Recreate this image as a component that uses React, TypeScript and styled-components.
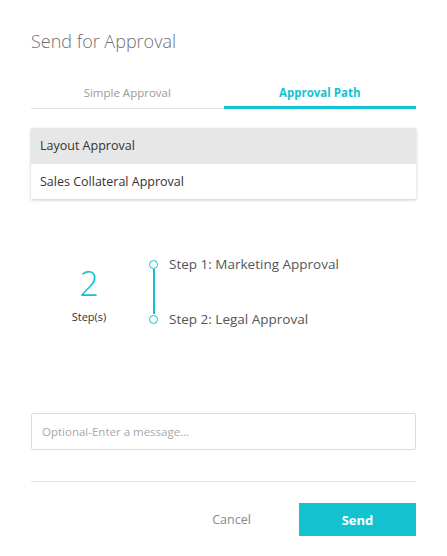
import React from "react";
import styled, { createGlobalStyle } from "styled-components";

const GlobalStyle = createGlobalStyle`
  html, body {
    margin: 0;
    padding: 0;
    background: #ffffff;
  }
  body {
    font-family: "Open Sans", "Liberation Sans", sans-serif;
  }
`;

const teal = "#12c3cf";

const Dialog = styled.div`
  width: 447px;
  height: 556px;
  box-sizing: border-box;
  padding: 28px 31px 0 31px;
  display: flex;
  flex-direction: column;
`;

const Title = styled.h2`
  margin: 0;
  font-size: 18px;
  font-weight: 300;
  color: #6f6f6f;
  line-height: 26px;
`;

const Tabs = styled.div`
  margin-top: 31px;
  display: flex;
  border-bottom: 1px solid #e3e3e3;
`;

const Tab = styled.div<{ $active?: boolean }>`
  flex: 1;
  text-align: center;
  font-size: 11.5px;
  line-height: 16px;
  padding-bottom: 5px;
  margin-bottom: -1px;
  color: ${(p) => (p.$active ? teal : "#9a9a9a")};
  font-weight: ${(p) => (p.$active ? 700 : 400)};
  border-bottom: 3px solid ${(p) => (p.$active ? teal : "transparent")};
`;

const List = styled.div`
  margin-top: 19px;
  box-shadow: 0 1px 3px rgba(0, 0, 0, 0.22);
  display: flex;
  flex-direction: column;
`;

const ListItem = styled.div<{ $selected?: boolean }>`
  height: 35.5px;
  display: flex;
  align-items: center;
  padding: 0 9px;
  font-size: 12.5px;
  color: #333333;
  background: ${(p) => (p.$selected ? "#e7e7e7" : "#ffffff")};
`;

const StepsArea = styled.div`
  margin-top: 56px;
  display: flex;
  align-items: flex-start;
`;

const Count = styled.div`
  width: 116px;
  margin-right: 2px;
  display: flex;
  flex-direction: column;
  align-items: center;
  padding-top: 9px;
`;

const CountNumber = styled.div`
  font-size: 34px;
  font-weight: 300;
  line-height: 38px;
  color: ${teal};
`;

const CountLabel = styled.div`
  font-size: 11px;
  color: #333333;
  margin-top: 7px;
`;

const Timeline = styled.div`
  display: flex;
  flex-direction: column;
  gap: 36px;
`;

const StepRow = styled.div`
  display: flex;
  align-items: center;
  gap: 11px;
  font-size: 13.5px;
  line-height: 19px;
  color: #555555;
  position: relative;
`;

const Dot = styled.span`
  width: 7px;
  height: 7px;
  border: 1.5px solid ${teal};
  border-radius: 50%;
  background: #ffffff;
  flex-shrink: 0;
`;

const Connector = styled.span`
  position: absolute;
  left: 4px;
  top: 14px;
  width: 2px;
  height: 45px;
  background: ${teal};
`;

const Message = styled.input`
  margin-top: 84px;
  height: 37px;
  box-sizing: border-box;
  border: 1px solid #dcdcdc;
  border-radius: 2px;
  padding: 0 10px;
  font-family: inherit;
  font-size: 11.5px;
  color: #333;
  outline: none;
  &::placeholder {
    color: #a8a8a8;
  }
`;

const Divider = styled.hr`
  margin: 31px 0 0 0;
  border: none;
  border-top: 1px solid #e3e3e3;
`;

const Actions = styled.div`
  margin-top: 21px;
  display: flex;
  justify-content: flex-end;
  align-items: center;
`;

const CancelButton = styled.button`
  background: none;
  border: none;
  font-family: inherit;
  font-size: 12.5px;
  color: #8a8a8a;
  width: 117px;
  height: 33px;
  margin-right: 9px;
  cursor: pointer;
`;

const SendButton = styled.button`
  background: ${teal};
  border: none;
  color: #ffffff;
  font-family: inherit;
  font-size: 13px;
  font-weight: 700;
  width: 117px;
  height: 33px;
  cursor: pointer;
`;

const App = () => {
  return (
    <>
      <GlobalStyle />
      <Dialog>
        <Title>Send for Approval</Title>
        <Tabs>
          <Tab>Simple Approval</Tab>
          <Tab $active>Approval Path</Tab>
        </Tabs>
        <List>
          <ListItem $selected>Layout Approval</ListItem>
          <ListItem>Sales Collateral Approval</ListItem>
        </List>
        <StepsArea>
          <Count>
            <CountNumber>2</CountNumber>
            <CountLabel>Step(s)</CountLabel>
          </Count>
          <Timeline>
            <StepRow>
              <Dot />
              <Connector />
              Step 1: Marketing Approval
            </StepRow>
            <StepRow>
              <Dot />
              Step 2: Legal Approval
            </StepRow>
          </Timeline>
        </StepsArea>
        <Message placeholder="Optional-Enter a message..." />
        <Divider />
        <Actions>
          <CancelButton>Cancel</CancelButton>
          <SendButton>Send</SendButton>
        </Actions>
      </Dialog>
    </>
  );
};

export default App;
